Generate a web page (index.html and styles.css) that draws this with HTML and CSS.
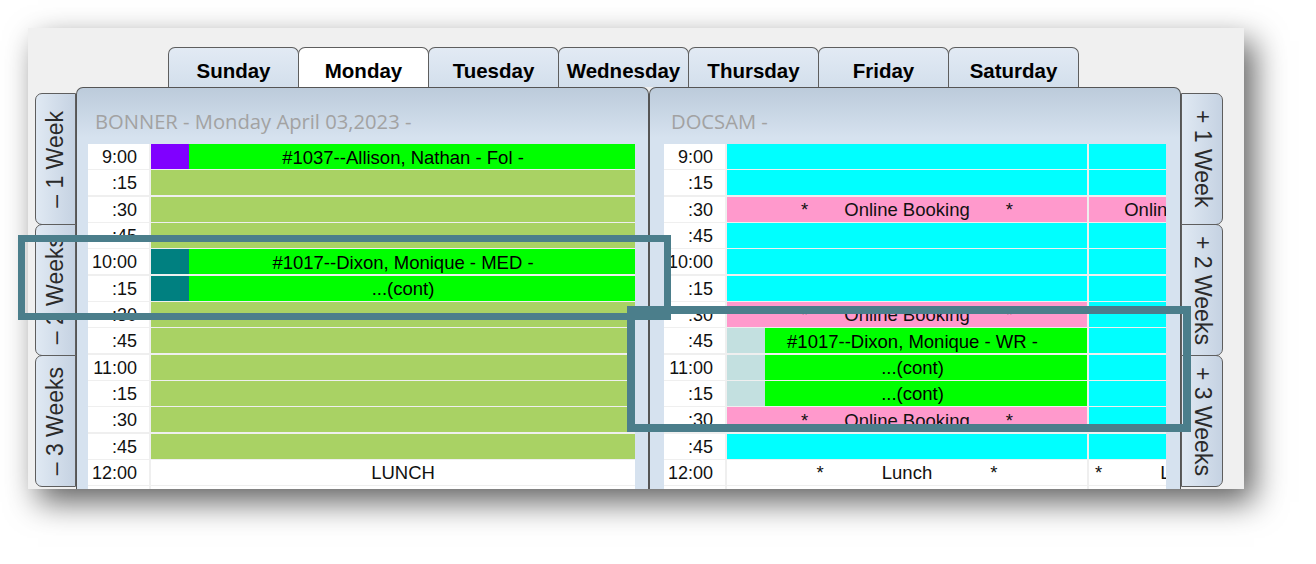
FILE: index.html
```html
<!DOCTYPE html>
<html>
<head>
<meta charset="utf-8">
<link rel="stylesheet" href="styles.css">
</head>
<body>
<div class="window">
  <div class="daytabs">
    <div class="daytab">Sunday</div>
    <div class="daytab active">Monday</div>
    <div class="daytab">Tuesday</div>
    <div class="daytab">Wednesday</div>
    <div class="daytab">Thursday</div>
    <div class="daytab">Friday</div>
    <div class="daytab">Saturday</div>
  </div>
  <div class="main">
    <div class="sidetabs left">
      <div class="sidetab"><span>– 1 Week</span></div>
      <div class="sidetab"><span>– 2 Weeks</span></div>
      <div class="sidetab"><span>– 3 Weeks</span></div>
    </div>
    <div class="panel p1">
      <div class="ptitle">BONNER - Monday April 03,2023 -</div>
      <div class="grid">
        <div class="t">9:00</div><div class="a pb">#1037--Allison, Nathan - Fol -</div>
        <div class="t">:15</div><div class="a ol"></div>
        <div class="t">:30</div><div class="a ol"></div>
        <div class="t">:45</div><div class="a ol"></div>
        <div class="t">10:00</div><div class="a tb">#1017--Dixon, Monique - MED -</div>
        <div class="t">:15</div><div class="a tb">...(cont)</div>
        <div class="t">:30</div><div class="a ol"></div>
        <div class="t">:45</div><div class="a ol"></div>
        <div class="t">11:00</div><div class="a ol"></div>
        <div class="t">:15</div><div class="a ol"></div>
        <div class="t">:30</div><div class="a ol"></div>
        <div class="t">:45</div><div class="a ol"></div>
        <div class="t">12:00</div><div class="a wh">LUNCH</div>
        <div class="t"></div><div class="a wh"></div>
      </div>
    </div>
    <div class="panel p2">
      <div class="ptitle">DOCSAM -</div>
      <div class="grid">
        <div class="t">9:00</div><div class="a cy"></div><div class="a cy"></div>
        <div class="t">:15</div><div class="a cy"></div><div class="a cy"></div>
        <div class="t">:30</div><div class="a pk"><span>*</span><span class="ob">Online Booking</span><span>*</span></div><div class="a pk c2"><span class="shift-ob">*</span><span class="ob">Online Booking</span><span>*</span></div>
        <div class="t">:45</div><div class="a cy"></div><div class="a cy"></div>
        <div class="t">10:00</div><div class="a cy"></div><div class="a cy"></div>
        <div class="t">:15</div><div class="a cy"></div><div class="a cy"></div>
        <div class="t">:30</div><div class="a pk"><span>*</span><span class="ob">Online Booking</span><span>*</span></div><div class="a cy"></div>
        <div class="t">:45</div><div class="a lb">#1017--Dixon, Monique - WR -</div><div class="a cy"></div>
        <div class="t">11:00</div><div class="a lb">...(cont)</div><div class="a cy"></div>
        <div class="t">:15</div><div class="a lb">...(cont)</div><div class="a cy"></div>
        <div class="t">:30</div><div class="a pk"><span>*</span><span class="ob">Online Booking</span><span>*</span></div><div class="a cy"></div>
        <div class="t">:45</div><div class="a cy"></div><div class="a cy"></div>
        <div class="t">12:00</div><div class="a wh"><span>*</span><span class="lu">Lunch</span><span>*</span></div><div class="a wh c2 lunch2"><span>*</span><span class="lu">Lunch</span><span>*</span></div>
        <div class="t"></div><div class="a wh"></div><div class="a wh"></div>
      </div>
    </div>
    <div class="sidetabs right">
      <div class="sidetab"><span>+ 1 Week</span></div>
      <div class="sidetab"><span>+ 2 Weeks</span></div>
      <div class="sidetab"><span>+ 3 Weeks</span></div>
    </div>
  </div>
</div>
<div class="annot a1"></div>
<div class="annot a2"></div>
</body>
</html>
```
FILE: styles.css
```css
* { box-sizing: border-box; }
html, body { margin: 0; padding: 0; }
body {
  position: relative;
  width: 1316px;
  height: 564px;
  overflow: hidden;
  background: #ffffff;
  padding: 28px 0 0 28px;
  font-family: "Liberation Sans", Arial, sans-serif;
}
.window {
  position: relative;
  width: 1216px;
  height: 461px;
  background: #f0f0f0;
  overflow: hidden;
  box-shadow: 10px 13px 30px rgba(0, 0, 0, 0.62);
}
.daytabs {
  display: flex;
  padding-left: 140px;
  padding-top: 19px;
  height: 59px;
}
.daytab {
  width: 131px;
  height: 40px;
  margin-right: -1px;
  border: 1px solid #5e5e5e;
  border-bottom: none;
  border-radius: 7px 7px 0 0;
  background: linear-gradient(#e2eaf4, #d3dfec);
  display: flex;
  align-items: center;
  justify-content: center;
  padding-top: 6px;
  font-weight: bold;
  font-size: 20.5px;
  color: #000;
}
.daytab.active { background: #ffffff; }
.main {
  display: flex;
  height: 402px;
}
.sidetabs {
  display: flex;
  flex-direction: column;
  padding-top: 6px;
}
.sidetabs.left { margin-left: 7px; width: 41px; }
.sidetabs.right { width: 42px; }
.sidetab {
  height: 132px;
  margin-bottom: -1px;
  border: 1px solid #5e5e5e;
  background: linear-gradient(to right, #e0e9f3, #c5d2e2);
  display: flex;
  align-items: center;
  justify-content: center;
  font-size: 23px;
  color: #2a2a2a;
}
.sidetabs.left .sidetab { border-radius: 7px 0 0 7px; }
.sidetabs.right .sidetab { border-radius: 0 7px 7px 0; }
.sidetab span { writing-mode: vertical-rl; white-space: nowrap; }
.sidetabs.left .sidetab span { transform: rotate(180deg); }
.panel {
  border: 1px solid #555;
  border-bottom: none;
  border-radius: 7px 7px 0 0;
  background: linear-gradient(#bccbdb, #d6e2ef 50px, #d6e2ef);
}
.p1 { width: 573px; }
.p2 { width: 532px; }
.ptitle {
  height: 56px;
  padding-top: 10px;
  display: flex;
  align-items: center;
  font-family: "Open Sans", sans-serif;
  font-size: 20.2px;
  color: #a2a2a2;
  white-space: nowrap;
}
.p1 .ptitle { padding-left: 18px; }
.p2 .ptitle { padding-left: 21px; }
.grid {
  display: grid;
  grid-auto-rows: 25px;
  row-gap: 1.33px;
  column-gap: 2px;
  background: #efefef;
}
.p1 .grid { margin-left: 11px; grid-template-columns: 61px 484px; width: 547px; }
.p2 .grid { margin-left: 14px; grid-template-columns: 61px 360px 77px; width: 502px; }
.t {
  background: #ffffff;
  text-align: right;
  padding-right: 12px;
  padding-top: 1px;
  font-size: 18px;
  line-height: 25px;
  color: #111;
}
.a {
  display: flex;
  align-items: center;
  justify-content: center;
  overflow: hidden;
  white-space: nowrap;
  padding-top: 2px;
  font-size: 18.5px;
  color: #000;
}
.p1 .a { padding-left: 20px; }
.ol { background: #a9d264; }
.cy { background: #00ffff; }
.pk { background: #ff99cc; color: #111; }
.wh { background: #ffffff; color: #111; }
.pb { background: linear-gradient(to right, #8000ff 38px, #00ff00 38px); }
.tb { background: linear-gradient(to right, #008080 38px, #00ff00 38px); }
.lb { background: linear-gradient(to right, #c3e0e0 38px, #00ff00 38px); padding-left: 11px; }
.ob { margin: 0 36px; }
.lu { margin: 0 58px; }
.c2 { justify-content: flex-start; }
.shift-ob { margin-left: -8px; }
.lunch2 { padding-left: 6px; }
.annot {
  position: absolute;
  border-style: solid;
  border-color: #4b7e8b;
}
.a1 { left: 18px; top: 235px; width: 653px; height: 85px; border-width: 7px; }
.a2 { left: 627px; top: 306px; width: 564px; height: 126px; border-width: 8px; }
```
